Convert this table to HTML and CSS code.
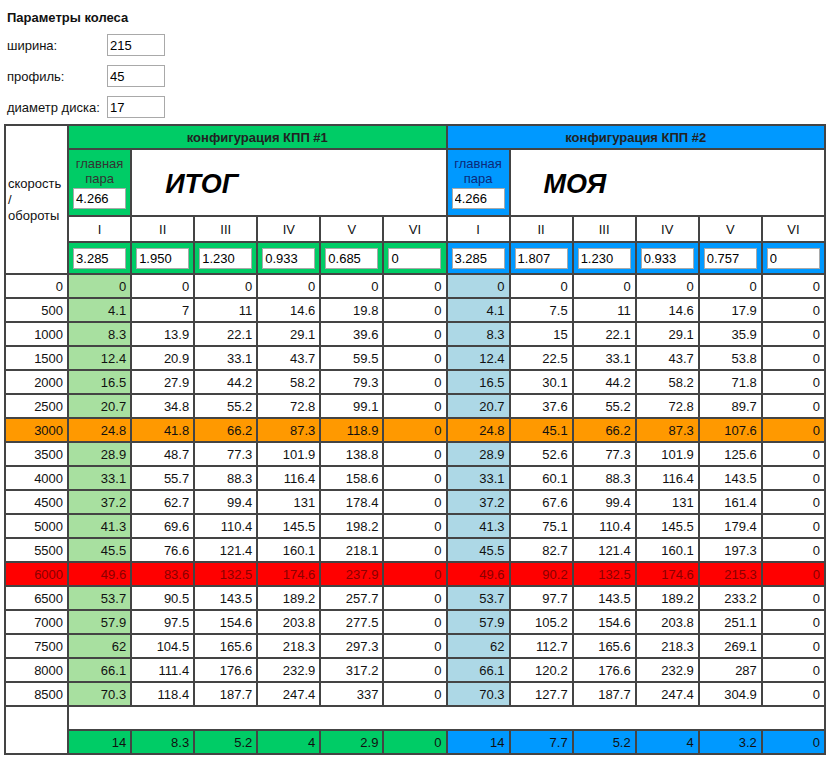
FILE: index.html
```html
<!DOCTYPE html>
<html lang="ru">
<head>
<meta charset="utf-8">
<link rel="stylesheet" href="styles.css">
</head>
<body>
<div class="params">
  <h1 class="title">Параметры колеса</h1>
  <div class="prow"><span class="plabel">ширина:</span><input class="pinput" value="215"></div>
  <div class="prow"><span class="plabel">профиль:</span><input class="pinput" value="45"></div>
  <div class="prow"><span class="plabel">диаметр диска:</span><input class="pinput" value="17"></div>
</div>
<table class="grid">
  <colgroup>
    <col class="c"><col class="c"><col class="c"><col class="c"><col class="c"><col class="c"><col class="c"><col class="c"><col class="c"><col class="c"><col class="c"><col class="c"><col class="c">
  </colgroup>
  <tbody>
    <tr class="r-head">
      <td rowspan="4" class="side">скорость<br>/<br>обороты</td>
      <td colspan="6" class="g head">конфигурация КПП #1</td>
      <td colspan="6" class="b head">конфигурация КПП #2</td>
    </tr>
    <tr class="r-main">
      <td class="g main">главная<br>пара<br><input class="cin" value="4.266"></td>
      <td colspan="5" class="big">ИТОГ</td>
      <td class="b main main-b">главная<br>пара<br><input class="cin" value="4.266"></td>
      <td colspan="5" class="big">МОЯ</td>
    </tr>
    <tr class="r-rom">
      <td>I</td><td>II</td><td>III</td><td>IV</td><td>V</td><td>VI</td>
      <td>I</td><td>II</td><td>III</td><td>IV</td><td>V</td><td>VI</td>
    </tr>
    <tr class="r-in">
      <td class="g"><input class="cin" value="3.285"></td>
      <td class="g"><input class="cin" value="1.950"></td>
      <td class="g"><input class="cin" value="1.230"></td>
      <td class="g"><input class="cin" value="0.933"></td>
      <td class="g"><input class="cin" value="0.685"></td>
      <td class="g"><input class="cin" value="0"></td>
      <td class="b"><input class="cin" value="3.285"></td>
      <td class="b"><input class="cin" value="1.807"></td>
      <td class="b"><input class="cin" value="1.230"></td>
      <td class="b"><input class="cin" value="0.933"></td>
      <td class="b"><input class="cin" value="0.757"></td>
      <td class="b"><input class="cin" value="0"></td>
    </tr>
    <tr class="d"><td>0</td><td class="lg">0</td><td>0</td><td>0</td><td>0</td><td>0</td><td>0</td><td class="lb">0</td><td>0</td><td>0</td><td>0</td><td>0</td><td>0</td></tr>
    <tr class="d"><td>500</td><td class="lg">4.1</td><td>7</td><td>11</td><td>14.6</td><td>19.8</td><td>0</td><td class="lb">4.1</td><td>7.5</td><td>11</td><td>14.6</td><td>17.9</td><td>0</td></tr>
    <tr class="d"><td>1000</td><td class="lg">8.3</td><td>13.9</td><td>22.1</td><td>29.1</td><td>39.6</td><td>0</td><td class="lb">8.3</td><td>15</td><td>22.1</td><td>29.1</td><td>35.9</td><td>0</td></tr>
    <tr class="d"><td>1500</td><td class="lg">12.4</td><td>20.9</td><td>33.1</td><td>43.7</td><td>59.5</td><td>0</td><td class="lb">12.4</td><td>22.5</td><td>33.1</td><td>43.7</td><td>53.8</td><td>0</td></tr>
    <tr class="d"><td>2000</td><td class="lg">16.5</td><td>27.9</td><td>44.2</td><td>58.2</td><td>79.3</td><td>0</td><td class="lb">16.5</td><td>30.1</td><td>44.2</td><td>58.2</td><td>71.8</td><td>0</td></tr>
    <tr class="d"><td>2500</td><td class="lg">20.7</td><td>34.8</td><td>55.2</td><td>72.8</td><td>99.1</td><td>0</td><td class="lb">20.7</td><td>37.6</td><td>55.2</td><td>72.8</td><td>89.7</td><td>0</td></tr>
    <tr class="d orange"><td>3000</td><td>24.8</td><td>41.8</td><td>66.2</td><td>87.3</td><td>118.9</td><td>0</td><td>24.8</td><td>45.1</td><td>66.2</td><td>87.3</td><td>107.6</td><td>0</td></tr>
    <tr class="d"><td>3500</td><td class="lg">28.9</td><td>48.7</td><td>77.3</td><td>101.9</td><td>138.8</td><td>0</td><td class="lb">28.9</td><td>52.6</td><td>77.3</td><td>101.9</td><td>125.6</td><td>0</td></tr>
    <tr class="d"><td>4000</td><td class="lg">33.1</td><td>55.7</td><td>88.3</td><td>116.4</td><td>158.6</td><td>0</td><td class="lb">33.1</td><td>60.1</td><td>88.3</td><td>116.4</td><td>143.5</td><td>0</td></tr>
    <tr class="d"><td>4500</td><td class="lg">37.2</td><td>62.7</td><td>99.4</td><td>131</td><td>178.4</td><td>0</td><td class="lb">37.2</td><td>67.6</td><td>99.4</td><td>131</td><td>161.4</td><td>0</td></tr>
    <tr class="d"><td>5000</td><td class="lg">41.3</td><td>69.6</td><td>110.4</td><td>145.5</td><td>198.2</td><td>0</td><td class="lb">41.3</td><td>75.1</td><td>110.4</td><td>145.5</td><td>179.4</td><td>0</td></tr>
    <tr class="d"><td>5500</td><td class="lg">45.5</td><td>76.6</td><td>121.4</td><td>160.1</td><td>218.1</td><td>0</td><td class="lb">45.5</td><td>82.7</td><td>121.4</td><td>160.1</td><td>197.3</td><td>0</td></tr>
    <tr class="d red"><td>6000</td><td>49.6</td><td>83.6</td><td>132.5</td><td>174.6</td><td>237.9</td><td>0</td><td>49.6</td><td>90.2</td><td>132.5</td><td>174.6</td><td>215.3</td><td>0</td></tr>
    <tr class="d"><td>6500</td><td class="lg">53.7</td><td>90.5</td><td>143.5</td><td>189.2</td><td>257.7</td><td>0</td><td class="lb">53.7</td><td>97.7</td><td>143.5</td><td>189.2</td><td>233.2</td><td>0</td></tr>
    <tr class="d"><td>7000</td><td class="lg">57.9</td><td>97.5</td><td>154.6</td><td>203.8</td><td>277.5</td><td>0</td><td class="lb">57.9</td><td>105.2</td><td>154.6</td><td>203.8</td><td>251.1</td><td>0</td></tr>
    <tr class="d"><td>7500</td><td class="lg">62</td><td>104.5</td><td>165.6</td><td>218.3</td><td>297.3</td><td>0</td><td class="lb">62</td><td>112.7</td><td>165.6</td><td>218.3</td><td>269.1</td><td>0</td></tr>
    <tr class="d"><td>8000</td><td class="lg">66.1</td><td>111.4</td><td>176.6</td><td>232.9</td><td>317.2</td><td>0</td><td class="lb">66.1</td><td>120.2</td><td>176.6</td><td>232.9</td><td>287</td><td>0</td></tr>
    <tr class="d"><td>8500</td><td class="lg">70.3</td><td>118.4</td><td>187.7</td><td>247.4</td><td>337</td><td>0</td><td class="lb">70.3</td><td>127.7</td><td>187.7</td><td>247.4</td><td>304.9</td><td>0</td></tr>
    <tr class="r-empty"><td rowspan="2" class="side"></td><td colspan="12"></td></tr>
    <tr class="d foot">
      <td class="g">14</td><td class="g">8.3</td><td class="g">5.2</td><td class="g">4</td><td class="g">2.9</td><td class="g">0</td>
      <td class="b">14</td><td class="b">7.7</td><td class="b">5.2</td><td class="b">4</td><td class="b">3.2</td><td class="b">0</td>
    </tr>
  </tbody>
</table>
</body>
</html>
```

FILE: styles.css
```css
html, body {
  margin: 0;
  padding: 0;
  background: #fff;
}
body {
  padding: 0 4px;
  font-family: "Liberation Sans", Arial, sans-serif;
  font-size: 13px;
  color: #111;
}
.params {
  padding: 10px 3px 6px 3px;
  display: flex;
  flex-direction: column;
}
.title {
  margin: 0 0 9px 0;
  font-size: 13px;
  font-weight: bold;
  line-height: 15px;
  color: #111;
}
.prow {
  display: flex;
  align-items: center;
  height: 22px;
  margin-bottom: 9px;
}
.prow:last-child {
  margin-bottom: 0;
}
.plabel {
  width: 100px;
  font-size: 13px;
}
.pinput {
  box-sizing: border-box;
  width: 58px;
  height: 22px;
  border: 1px solid #a9a9a9;
  padding: 1px 2px;
  font-family: "Liberation Sans", Arial, sans-serif;
  font-size: 13px;
  color: #000;
  background: #fff;
  margin: 0;
}
.grid {
  border-collapse: collapse;
  table-layout: fixed;
  width: 822px;
  border: 2px solid #444;
}
.grid col.c {
  width: 63px;
}
.grid td {
  border: 2px solid #444;
  padding: 0 4px;
  font-size: 13px;
  line-height: 15px;
  overflow: hidden;
  white-space: nowrap;
}
.side {
  background: #fff;
  text-align: left;
  vertical-align: middle;
  padding: 0 2px !important;
  white-space: normal !important;
  line-height: 16px !important;
}
.g { background: #00cc66; }
.b { background: #0099ff; }
.lg { background: #a8e0a0; }
.lb { background: #add8e6; }
.r-head td.head {
  height: 22px;
  text-align: center;
  font-weight: bold;
  color: #222;
}
.r-main td {
  height: 56px;
}
td.main {
  text-align: center;
  vertical-align: top;
  padding: 6px 4px 3px 4px;
  line-height: 15px;
  color: #333;
}
td.main-b {
  color: #0c2a7a;
}
td.main .cin {
  margin-top: 2px;
  display: block;
}
td.big {
  background: #fff;
  font-size: 27px;
  font-weight: bold;
  font-style: italic;
  padding-left: 33px;
  padding-top: 3px;
  color: #000;
  line-height: 30px;
}
.r-rom td {
  height: 24px;
  text-align: center;
  background: #fff;
}
.r-in td {
  height: 30px;
  padding: 0 4px;
}
.cin {
  box-sizing: border-box;
  width: 53px;
  height: 21px;
  border: 1px solid #a9a9a9;
  padding: 1px 2px;
  margin: 0;
  font-family: "Liberation Sans", Arial, sans-serif;
  font-size: 13px;
  color: #000;
  background: #fff;
  text-align: left;
}
tr.d td {
  height: 22px;
  text-align: right;
  padding: 0 4px 0 2px;
}
tr.orange td {
  background: #ff9900;
}
tr.red td {
  background: #ff0000;
  color: #8a0000;
}
.r-empty td {
  height: 22px;
  background: #fff;
}
tr.foot td.g { background: #00cc66; }
tr.foot td.b { background: #0099ff; }
```
